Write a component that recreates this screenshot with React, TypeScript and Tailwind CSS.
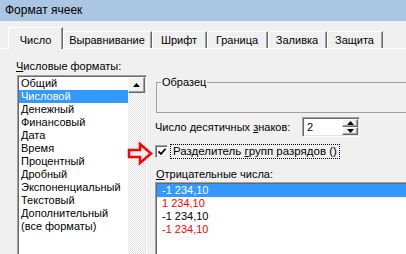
import React from 'react';

const FORMATS = [
  'Общий',
  'Числовой',
  'Денежный',
  'Финансовый',
  'Дата',
  'Время',
  'Процентный',
  'Дробный',
  'Экспоненциальный',
  'Текстовый',
  'Дополнительный',
  '(все форматы)',
];

const NEGATIVES: { text: string; red: boolean }[] = [
  { text: '-1 234,10', red: false },
  { text: '1 234,10', red: true },
  { text: '-1 234,10', red: false },
  { text: '-1 234,10', red: true },
];

const TABS: { label: string; w: string }[] = [
  { label: 'Выравнивание', w: 'w-[89px]' },
  { label: 'Шрифт', w: 'w-[55px]' },
  { label: 'Граница', w: 'w-[61px]' },
  { label: 'Заливка', w: 'w-[59px]' },
  { label: 'Защита', w: 'w-[56px]' },
];

const sunken =
  'border border-t-[#a0a0a0] border-l-[#a0a0a0] border-r-white border-b-white p-px shadow-[inset_1px_1px_0_#696969,inset_-1px_-1px_0_#e3e3e3] bg-white';
const raised =
  'border border-t-white border-l-white border-r-[#696969] border-b-[#696969] shadow-[inset_-1px_-1px_0_#a0a0a0] bg-[#f0f0f0]';

function Tri({ down }: { down?: boolean }) {
  return (
    <svg width="7" height="4" viewBox="0 0 7 4">
      <path d={down ? 'M0 0H7L3.5 4Z' : 'M0 4H7L3.5 0Z'} fill="#000" />
    </svg>
  );
}

export default function App() {
  return (
    <div className="relative h-[254px] w-[406px] overflow-hidden bg-[#f0f0f0] font-['Liberation_Sans',Arial,sans-serif] text-[11px] leading-[13px] text-black">
      <div className="flex h-[21px] items-center bg-[#abc6e3] pl-[5px] text-[12px]">Формат ячеек</div>

      <div className="flex h-[28px] items-end border-b border-b-white pl-[8px]">
        <div className="relative z-10 -mb-px flex h-[22px] w-[55px] items-start justify-center rounded-tl-[2px] border-l border-t border-l-white border-t-white border-r border-r-[#696969] bg-[#f0f0f0] pt-[6px] shadow-[inset_-1px_0_0_#a0a0a0]">
          Число
        </div>
        {TABS.map((t) => (
          <div
            key={t.label}
            className={`flex h-[17px] ${t.w} items-center justify-center border-t border-t-white border-r border-r-[#696969] shadow-[inset_1px_0_0_#fff,inset_-1px_0_0_#a0a0a0]`}
          >
            {t.label}
          </div>
        ))}
      </div>

      <div className="flex">
        <div className="w-[155px] shrink-0 pl-[16px] pt-[10px]">
          <div className="h-[14px] leading-[14px]">
            <span className="underline">Ч</span>исловые форматы:
          </div>
          <div className={`ml-px mt-[2px] flex h-[200px] w-[130px] ${sunken}`}>
            <div className="flex-1">
              {FORMATS.map((f, i) => (
                <div key={f} className={`h-[13px] pl-[2px] ${i === 1 ? 'bg-[#3399ff] text-white' : ''}`}>
                  {f}
                </div>
              ))}
            </div>
            <div className="w-[17px] bg-[repeating-conic-gradient(#e4e4e4_0%_25%,#ffffff_0%_50%)] bg-[length:2px_2px]">
              <div className={`flex h-[16px] items-center justify-center ${raised}`}>
                <Tri />
              </div>
            </div>
          </div>
        </div>

        <div className="flex-1">
          <fieldset className="ml-px mt-[26px] h-[38px] w-[300px] border border-[#a0a0a0]">
            <legend className="ml-[4px] h-[14px] px-px leading-[14px]">Образец</legend>
          </fieldset>

          <div className="mt-[4px] flex h-[20px] items-center">
            <div className="w-[147px]">
              Число десятичных <span className="underline">з</span>наков:
            </div>
            <div className={`flex h-[20px] w-[58px] items-stretch ${sunken}`}>
              <div className="flex flex-1 items-center pl-[3px]">2</div>
              <div className="flex w-[16px] flex-col">
                <div className={`flex flex-1 items-center justify-center ${raised}`}>
                  <Tri />
                </div>
                <div className={`flex flex-1 items-center justify-center ${raised}`}>
                  <Tri down />
                </div>
              </div>
            </div>
          </div>

          <div className="mt-[7px] flex h-[15px] items-center">
            <div className={`flex h-[13px] w-[13px] items-center justify-center ${sunken}`}>
              <svg width="8" height="7" viewBox="0 0 8 7">
                <path d="M0.5 3.5L3 6L7.5 0.8" stroke="#000" strokeWidth="1.8" fill="none" />
              </svg>
            </div>
            <div className="ml-[2px] h-[15px] border border-dotted border-black px-[2px] text-[11.5px] leading-[13px]">
              <span>
                Разделитель <span className="underline">г</span>рупп разрядов ()
              </span>
            </div>
          </div>

          <div className="mt-[8px] h-[14px] pl-px leading-[14px]">
            <span className="underline">О</span>трицательные числа:
          </div>
          <div className={`mt-px h-[90px] w-[270px] ${sunken}`}>
            {NEGATIVES.map((n, i) => (
              <div
                key={i}
                className={`h-[13px] pl-[5px] ${i === 0 ? 'bg-[#3399ff] text-white' : n.red ? 'text-[#ff0000]' : ''}`}
              >
                {n.text}
              </div>
            ))}
          </div>
        </div>
      </div>

      <svg className="absolute left-[127px] top-[142px]" width="26" height="24" viewBox="0 0 26 24">
        <path d="M2 8H13V2L24 11.5L13 21V15H2Z" fill="none" stroke="#ff0000" strokeWidth="2.5" strokeLinejoin="miter" />
      </svg>
    </div>
  );
}
